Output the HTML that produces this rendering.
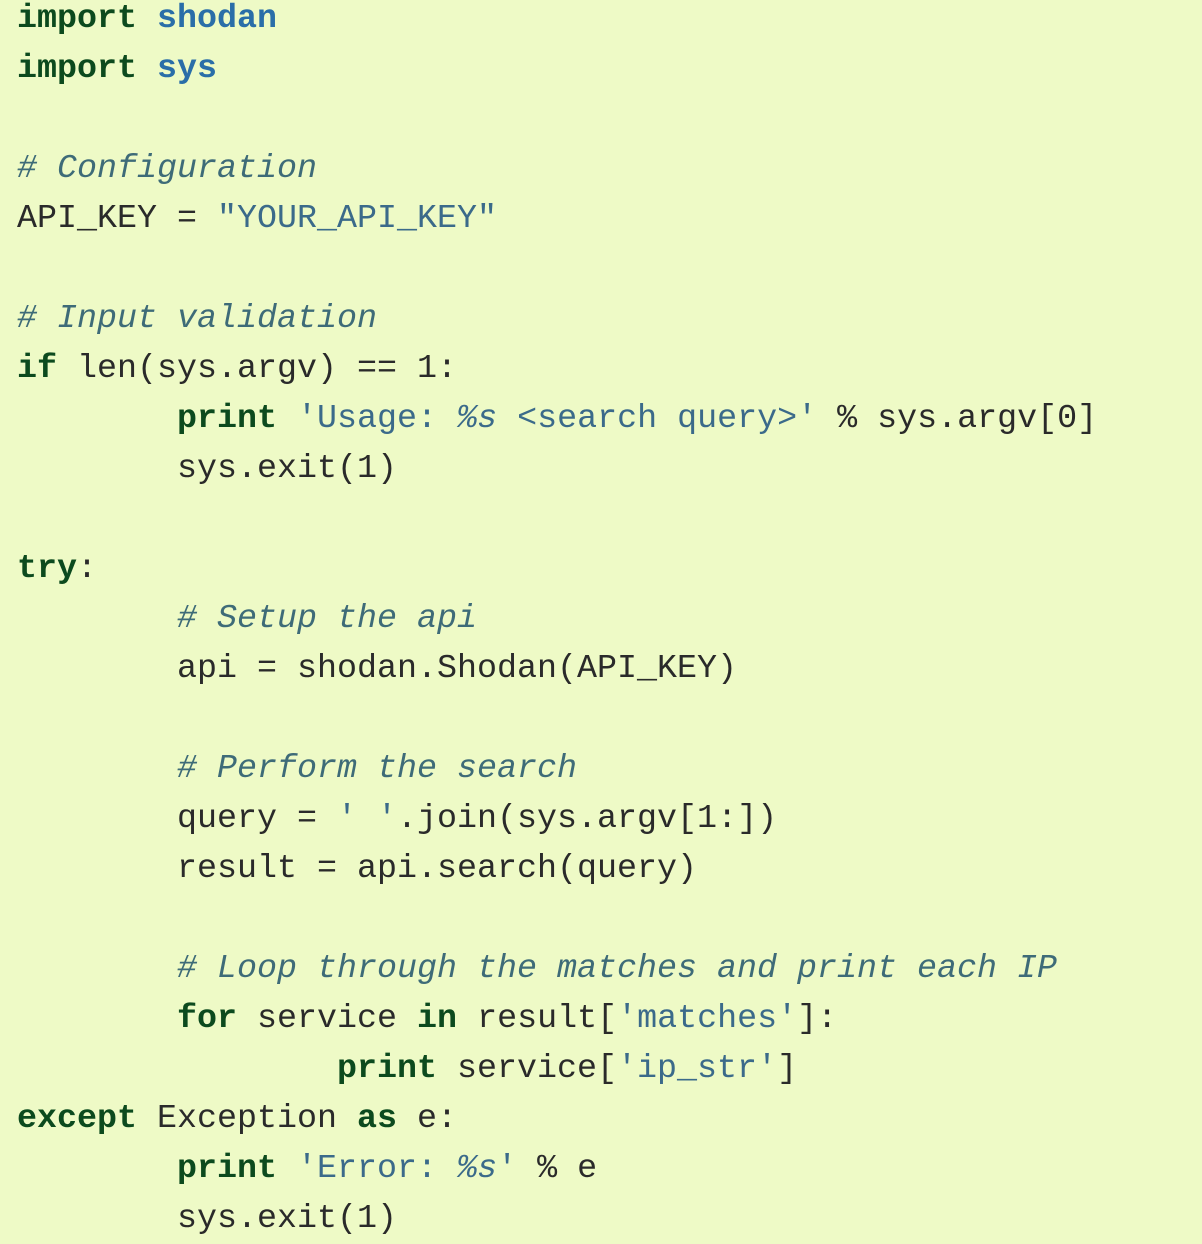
<!DOCTYPE html>
<html><head><meta charset="utf-8"><style>
html,body{margin:0;padding:0;background:#eefac6;width:1202px;height:1240px;overflow:hidden}
pre{margin:0;position:absolute;left:17px;top:-6px;font-family:"Liberation Mono",monospace;font-size:33.33px;line-height:50px;color:#2a2a2a}
.k{color:#0c4a1e;font-weight:bold}
.m{color:#2a6ea8;font-weight:bold}
.c{color:#3e6b78;font-style:italic}
.s{color:#3b6a8a}
.n{color:#2a2a2a}
</style></head><body>
<pre><span class="k">import</span> <span class="m">shodan</span>
<span class="k">import</span> <span class="m">sys</span>

<span class="c"># Configuration</span>
API_KEY = <span class="s">"YOUR_API_KEY"</span>

<span class="c"># Input validation</span>
<span class="k">if</span> len(sys.argv) == <span class="n">1</span>:
        <span class="k">print</span> <span class="s">'Usage: <i>%s</i> &lt;search query&gt;'</span> % sys.argv[<span class="n">0</span>]
        sys.exit(<span class="n">1</span>)

<span class="k">try</span>:
        <span class="c"># Setup the api</span>
        api = shodan.Shodan(API_KEY)

        <span class="c"># Perform the search</span>
        query = <span class="s">' '</span>.join(sys.argv[<span class="n">1</span>:])
        result = api.search(query)

        <span class="c"># Loop through the matches and print each IP</span>
        <span class="k">for</span> service <span class="k">in</span> result[<span class="s">'matches'</span>]:
                <span class="k">print</span> service[<span class="s">'ip_str'</span>]
<span class="k">except</span> Exception <span class="k">as</span> e:
        <span class="k">print</span> <span class="s">'Error: <i>%s</i>'</span> % e
        sys.exit(<span class="n">1</span>)</pre>
</body></html>
